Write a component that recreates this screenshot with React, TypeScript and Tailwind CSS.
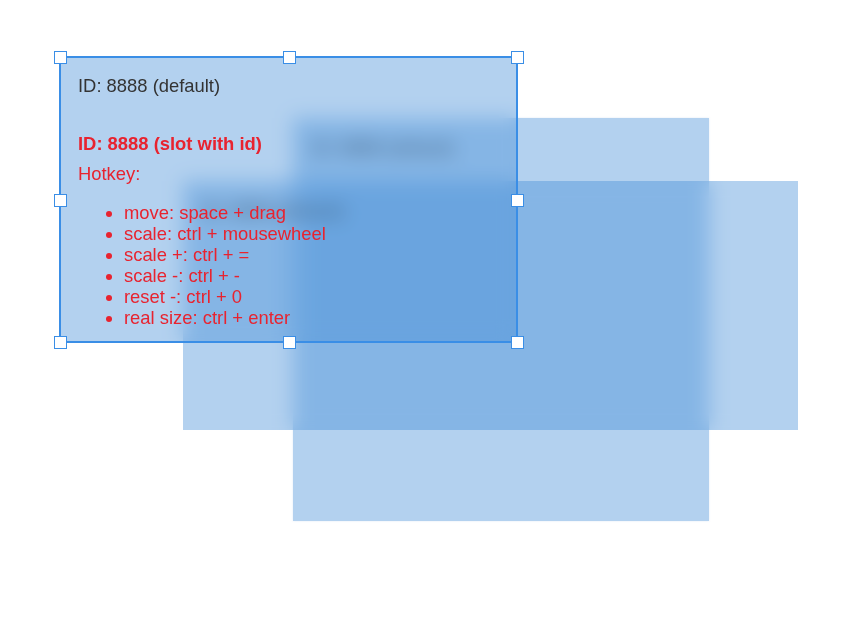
const hotkeys = [
  "move: space + drag",
  "scale: ctrl + mousewheel",
  "scale +: ctrl + =",
  "scale -: ctrl + -",
  "reset -: ctrl + 0",
  "real size: ctrl + enter",
];

const handles = [
  "left-[-7.5px] top-[-7.5px]",
  "left-[221.5px] top-[-7.5px]",
  "right-[-7.5px] top-[-7.5px]",
  "left-[-7.5px] top-[135.5px]",
  "right-[-7.5px] top-[135.5px]",
  "left-[-7.5px] bottom-[-7.5px]",
  "left-[221.5px] bottom-[-7.5px]",
  "right-[-7.5px] bottom-[-7.5px]",
];

function Label() {
  return <div className="leading-[21px] text-[#333]">ID: 8888 (default)</div>;
}

export default function App() {
  return (
    <div
      className="relative w-[844px] h-[618px] overflow-hidden bg-white text-[18.4px]"
      style={{ fontFamily: '"Liberation Sans", Arial, sans-serif' }}
    >
      {/* back layer */}
      <div className="absolute left-[293px] top-[118px] w-[416px] h-[403px] bg-[rgba(64,140,216,0.4)] backdrop-blur-[10px] pl-[19px] pt-[19px] shadow-[0_0_2px_rgba(60,120,200,0.15)]">
        <Label />
      </div>

      {/* middle layer */}
      <div className="absolute left-[183px] top-[181px] w-[615px] h-[249px] bg-[rgba(64,140,216,0.4)] backdrop-blur-[10px] pl-[19px] pt-[19px]">
        <Label />
      </div>

      {/* selected layer */}
      <div className="absolute left-[59px] top-[56px] w-[459px] h-[287px] border-2 border-[#3a8ee6] bg-[rgba(64,140,216,0.4)] backdrop-blur-[10px] pl-[17px] pt-[17px]">
        <Label />
        <div className="mt-[37px] leading-[21px] font-bold text-[#e8232f]">
          ID: 8888 (slot with id)
        </div>
        <div className="mt-[9px] leading-[21px] text-[#e8232f]">Hotkey:</div>
        <ul className="mt-[18px] list-disc pl-[46px] text-[#e8232f] leading-[21px]">
          {hotkeys.map((h) => (
            <li key={h}>{h}</li>
          ))}
        </ul>

        {handles.map((pos) => (
          <span
            key={pos}
            className={`absolute ${pos} w-[13px] h-[13px] bg-white border-[1.5px] border-[#3a8ee6]`}
          />
        ))}
      </div>
    </div>
  );
}
